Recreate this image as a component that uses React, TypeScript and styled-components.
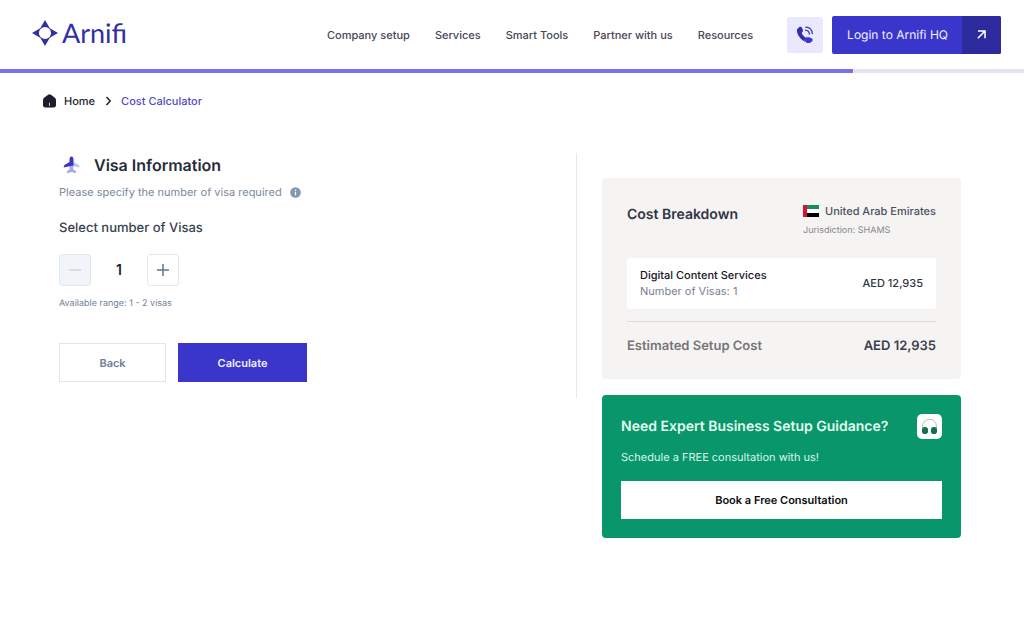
import React, { useState } from "react";
import styled, { createGlobalStyle } from "styled-components";

const GlobalStyle = createGlobalStyle`
  *, *::before, *::after { box-sizing: border-box; }
  body {
    margin: 0;
    background: #fff;
    color: #3f4254;
    font-family: Inter, "Liberation Sans", sans-serif;
    font-size: 11px;
    line-height: 16px;
    text-rendering: geometricPrecision;
  }
  h1, h2, p { margin: 0; }
  a { color: inherit; text-decoration: none; }
  button { font: inherit; cursor: pointer; text-rendering: inherit; }
  svg { display: block; flex: none; }
`;

const Header = styled.header`
  display: flex;
  align-items: center;
  height: 69px;
  padding: 0 23px 0 32px;
`;

const Brand = styled.a`
  display: flex;
  align-items: center;
  gap: 4px;
  margin-right: auto;
  padding-bottom: 4px;
  color: #322ea6;
  font-family: Lato, "Open Sans", sans-serif;
  font-size: 27px;
  line-height: 32px;
`;

const Nav = styled.nav`
  display: flex;
  gap: 25px;
  margin-right: 34px;
  font-size: 11px;
  font-weight: 500;
  color: #474556;
  white-space: nowrap;
`;

const CallButton = styled.button`
  display: grid;
  place-items: center;
  width: 36px;
  height: 36px;
  margin-right: 9px;
  padding: 0;
  border: 0;
  border-radius: 3px;
  background: #e9e8fd;
`;

const LoginLink = styled.a`
  display: flex;
  height: 38px;
  border-radius: 2px;
  overflow: hidden;
  background: #3a36cc;
  color: #f1f0ff;
  font-size: 12px;
  white-space: nowrap;
`;

const LoginLabel = styled.span`
  display: flex;
  align-items: center;
  padding: 0 14px 0 15px;
`;

const LoginArrow = styled.span`
  display: grid;
  place-items: center;
  width: 39px;
  background: #2d2a9e;
`;

const Progress = styled.div`
  height: 4px;
  background: #e5e4ee;
`;

const ProgressFill = styled.div`
  height: 100%;
  background: #7572ec;
`;

const Breadcrumb = styled.nav`
  display: flex;
  align-items: center;
  gap: 8px;
  padding: 20px 43px 0;
  font-size: 11px;
  font-weight: 500;
  color: #24232e;
`;

const HomeLink = styled.a`
  display: flex;
  align-items: center;
  gap: 8px;
`;

const Current = styled.span`
  color: #4f4bc4;
`;

const Main = styled.main`
  display: grid;
  grid-template-columns: minmax(0, 1fr) 359px;
  align-items: start;
  gap: 25px;
  padding: 44px 63px 32px 59px;
`;

const FormPanel = styled.section`
  min-height: 245px;
  border-right: 1px solid #e6e8ec;
`;

const Title = styled.h1`
  display: flex;
  align-items: center;
  gap: 14px;
  padding-left: 4px;
  font-size: 16px;
  font-weight: 600;
  line-height: 24px;
  color: #262b3b;
`;

const Hint = styled.p`
  display: flex;
  align-items: center;
  gap: 8px;
  margin-top: 7px;
  color: #7a889b;
`;

const FieldLabel = styled.label`
  display: block;
  margin-top: 20px;
  font-size: 13px;
  font-weight: 500;
  color: #3b4252;
`;

const Stepper = styled.div`
  display: flex;
  align-items: center;
  margin-top: 18px;
`;

const StepButton = styled.button`
  display: grid;
  place-items: center;
  width: 32px;
  height: 32px;
  padding: 0;
  border: 1px solid #e2e8f0;
  border-radius: 3px;
  background: #fff;
  color: #64748b;
  &:disabled { background: #f1f5fa; color: #ccd5e1; cursor: default; }
`;

const Count = styled.input`
  width: 56px;
  padding: 0;
  border: 0;
  background: none;
  font: 600 14px/20px Inter, sans-serif;
  text-align: center;
  color: #1e2433;
`;

const RangeNote = styled.p`
  margin-top: 10px;
  font-size: 9px;
  color: #718096;
`;

const Actions = styled.div`
  display: flex;
  gap: 12px;
  margin-top: 31px;
`;

const ActionButton = styled.button<{ $primary?: boolean }>`
  width: ${(p) => (p.$primary ? 129 : 107)}px;
  height: 39px;
  padding: 0;
  border: 1px solid ${(p) => (p.$primary ? "#3a36cc" : "#e2e5ea")};
  background: ${(p) => (p.$primary ? "#3a36cc" : "#fff")};
  color: ${(p) => (p.$primary ? "#f0efff" : "#718096")};
  font-weight: 600;
`;

const Side = styled.aside`
  display: flex;
  flex-direction: column;
  gap: 16px;
  padding-top: 25px;
`;

const CostCard = styled.section`
  padding: 25px 25px 23px;
  border-radius: 4px;
  background: #f6f4f3;
`;

const Row = styled.div`
  display: flex;
  align-items: center;
  justify-content: space-between;
`;

const CardTitle = styled.h2`
  padding-bottom: 13px;
  font-size: 14px;
  font-weight: 600;
  line-height: 20px;
  color: #2f3545;
`;

const Country = styled.p`
  display: flex;
  align-items: center;
  gap: 6px;
  color: #4b5160;
  font-weight: 500;
`;

const Jurisdiction = styled.p`
  margin-top: 4px;
  font-size: 9px;
  color: #85868f;
`;

const ItemRow = styled(Row)`
  margin-top: 19px;
  padding: 9px 13px 10px;
  border-radius: 3px;
  background: #fff;
  font-weight: 500;
  color: #2f3341;
`;

const ItemName = styled.p`
  font-weight: 500;
  color: #15161c;
`;

const ItemMeta = styled.p`
  font-weight: 400;
  color: #7b8090;
`;

const TotalRow = styled(Row)`
  margin-top: 12px;
  padding: 14px 0 0;
  border-top: 1px solid #dcdcde;
  font-size: 13px;
  font-weight: 600;
  line-height: 20px;
  color: #77757a;
`;

const TotalValue = styled.strong`
  font-weight: 600;
  color: #3a3e4d;
`;

const ExpertCard = styled.section`
  padding: 19px;
  border-radius: 4px;
  background: #09966a;
  color: #d9f7e9;
`;

const ExpertTitle = styled.h2`
  font-size: 14px;
  font-weight: 600;
  line-height: 20px;
  color: #e2fbef;
`;

const HeadsetBadge = styled.span`
  display: grid;
  place-items: center;
  width: 25px;
  height: 25px;
  border-radius: 5px;
  background: #fff;
`;

const ExpertText = styled.p`
  margin-top: 10px;
`;

const BookButton = styled.button`
  width: 100%;
  height: 38px;
  margin-top: 16px;
  padding: 0;
  border: 0;
  background: #fff;
  color: #0c0d10;
  font-weight: 600;
`;

const NAV_ITEMS = ["Company setup", "Services", "Smart Tools", "Partner with us", "Resources"];
const MIN = 1;
const MAX = 2;

const Logo = () => (
  <svg width="26" height="26" viewBox="0 0 26 26" fill="currentColor" aria-hidden="true">
    <path fillRule="evenodd" d="M13 0L17.800 8.200L26 13L17.800 17.800L13 26L8.200 17.800L0 13L8.200 8.200zM13 6.900a6.100 6.100 0 100 12.200a6.100 6.100 0 000-12.200z" />
  </svg>
);

const Phone = () => (
  <svg width="18" height="18" viewBox="0 0 18 18" aria-hidden="true">
    <path d="M3.200 1.200C4.400.4 5.600 1 6.200 2.300l.7 1.800c.4 1.200-.3 1.900-1.100 2.700-.3 1.100 2.500 4.200 4 4.800l-1.500 2.700 1.800 1.900C6 15.400 1 9.200.9 4.600.9 3 1.900 2 3.200 1.200z" fill="#322ea6" />
    <path d="M8 13c1.100-1.600 3.200-2.200 5-1.700l2.500.9c1.300.6 1.500 2 .6 3.100-1.400 1.800-3.800 2.200-6 1.200z" fill="#3a36cc" />
    <path d="M9.500 4.200c2.400.2 3.600 1.500 3.900 3.900M9.800 1.200c3.900.2 6.200 2.500 6.500 6.400" fill="none" stroke="#3a36a8" strokeWidth="1.200" strokeLinecap="round" />
  </svg>
);

const Arrow = () => (
  <svg width="9" height="9" viewBox="0 0 11 11" fill="none" stroke="#fff" strokeWidth="1.900" aria-hidden="true">
    <path d="M1 10L9.500 1.500M1.200 1.200h8.600V10" />
  </svg>
);

const Home = () => (
  <svg width="13" height="14" viewBox="0 0 13 14" aria-hidden="true">
    <path d="M5.100.8a2.300 2.300 0 012.800 0l4 3c.7.500 1.100 1.200 1.100 2.100V11a2.500 2.500 0 01-2.500 2.500h-8A2.500 2.500 0 010 11V5.900c0-.9.400-1.600 1.100-2.100z" fill="#1d1e2c" />
    <path d="M6.500 9v2.500" stroke="#c9c9d2" strokeLinecap="round" />
  </svg>
);

const Chevron = () => (
  <svg width="10" height="10" viewBox="0 0 10 10" fill="none" stroke="#24232e" strokeWidth="1.500" aria-hidden="true">
    <path d="M3.500 1L7.200 5L3.500 9" />
  </svg>
);

const Plane = () => (
  <svg width="17" height="18" viewBox="0 0 17 18" aria-hidden="true">
    <path d="M9.800 9.900V5.800l4.600 2.400c1.400.8 2 1.500 2 3.300z" fill="#c1bff3" />
    <path d="M6.600 9.400h3.600l.2 3.900 2.600 2v1.900l-4.500-1.100L4 17.200v-1.900l2.600-2z" fill="#aaa7ee" />
    <path d="M8.500.4c1.400 0 2 1.500 2 3.300v5.800l-3.800.7-6 1.400c0-1.900.6-2.600 2-3.400l3.800-2.300V3.700C6.500 1.900 7.100.4 8.500.4z" fill="#3a36c0" />
  </svg>
);

const Info = () => (
  <svg width="11" height="11" viewBox="0 0 11 11" aria-hidden="true">
    <circle cx="5.500" cy="5.500" r="5.300" fill="#8698ae" />
    <path d="M5.500 4.800V8.300M5.500 2.500v1.200" stroke="#fff" strokeWidth="1.200" />
  </svg>
);

const Flag = () => (
  <svg width="16" height="12" viewBox="0 0 16 12" aria-hidden="true">
    <path fill="#fff" d="M0 0h16v12H0z" />
    <path fill="#159052" d="M0 0h16v4H0z" />
    <path fill="#000" d="M0 8h16v4H0z" />
    <path fill="#cf1734" d="M0 0h4v12H0z" />
  </svg>
);

const Headset = () => (
  <svg width="17" height="17" viewBox="0 0 17 17" aria-hidden="true">
    <path d="M1.500 10V8.300a7 7 0 0114 0V10" fill="none" stroke="#a4c4b5" strokeWidth="1" />
    <rect x="1" y="9" width="6" height="7" rx="2.800" fill="#17704b" />
    <rect x="10" y="9" width="6" height="7" rx="2.800" fill="#17704b" />
  </svg>
);

const StepIcon = ({ plus }: { plus?: boolean }) => (
  <svg width="12" height="12" viewBox="0 0 12 12" fill="none" stroke="currentColor" strokeWidth="1.500" aria-hidden="true">
    <path d={plus ? "M0 6h12M6 0v12" : "M0 6h12"} />
  </svg>
);

export default function App() {
  const [visas, setVisas] = useState(MIN);
  return (
    <>
      <GlobalStyle />
      <Header>
        <Brand href="#"><Logo />Arnifi</Brand>
        <Nav aria-label="Main">
          {NAV_ITEMS.map((item) => <a href="#" key={item}>{item}</a>)}
        </Nav>
        <CallButton type="button" aria-label="Call us"><Phone /></CallButton>
        <LoginLink href="#">
          <LoginLabel>Login to Arnifi HQ</LoginLabel>
          <LoginArrow><Arrow /></LoginArrow>
        </LoginLink>
      </Header>
      <Progress role="progressbar" aria-label="Step 5 of 6" aria-valuenow={5} aria-valuemax={6}>
        <ProgressFill style={{ width: `${(5 / 6) * 100}%` }} />
      </Progress>
      <Breadcrumb aria-label="Breadcrumb">
        <HomeLink href="#"><Home />Home</HomeLink>
        <Chevron />
        <Current aria-current="page">Cost Calculator</Current>
      </Breadcrumb>
      <Main>
        <FormPanel>
          <Title><Plane />Visa Information</Title>
          <Hint>Please specify the number of visa required <Info /></Hint>
          <FieldLabel htmlFor="visas">Select number of Visas</FieldLabel>
          <Stepper>
            <StepButton type="button" aria-label="Fewer visas" disabled={visas <= MIN} onClick={() => setVisas(visas - 1)}>
              <StepIcon />
            </StepButton>
            <Count id="visas" readOnly value={visas} />
            <StepButton type="button" aria-label="More visas" disabled={visas >= MAX} onClick={() => setVisas(visas + 1)}>
              <StepIcon plus />
            </StepButton>
          </Stepper>
          <RangeNote>Available range: 1 - 2 visas</RangeNote>
          <Actions>
            <ActionButton type="button">Back</ActionButton>
            <ActionButton type="button" $primary>Calculate</ActionButton>
          </Actions>
        </FormPanel>
        <Side>
          <CostCard>
            <Row>
              <CardTitle>Cost Breakdown</CardTitle>
              <div>
                <Country><Flag />United Arab Emirates</Country>
                <Jurisdiction>Jurisdiction: SHAMS</Jurisdiction>
              </div>
            </Row>
            <ItemRow>
              <div>
                <ItemName>Digital Content Services</ItemName>
                <ItemMeta>Number of Visas: {visas}</ItemMeta>
              </div>
              <span>AED 12,935</span>
            </ItemRow>
            <TotalRow>
              <span>Estimated Setup Cost</span>
              <TotalValue>AED 12,935</TotalValue>
            </TotalRow>
          </CostCard>
          <ExpertCard>
            <Row>
              <ExpertTitle>Need Expert Business Setup Guidance?</ExpertTitle>
              <HeadsetBadge><Headset /></HeadsetBadge>
            </Row>
            <ExpertText>Schedule a FREE consultation with us!</ExpertText>
            <BookButton type="button">Book a Free Consultation</BookButton>
          </ExpertCard>
        </Side>
      </Main>
    </>
  );
}
